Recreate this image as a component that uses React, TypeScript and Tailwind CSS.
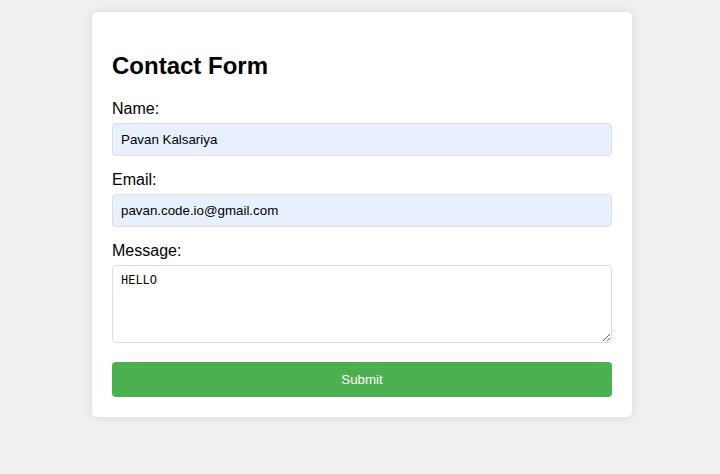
export default function App() {
  return (
    <div className="min-h-[474px] bg-[#f0f0f0] pl-1 pt-3 font-['Liberation_Sans',Arial,sans-serif] text-black">
      <div className="mx-auto w-[540px] rounded-[5px] bg-white p-5 shadow-[0_0_10px_rgba(0,0,0,0.1)]">
        <h2 className="my-5 text-2xl font-bold leading-7">Contact Form</h2>
        <form onSubmit={(e) => e.preventDefault()}>
          <label className="mb-[5px] block text-base leading-[18px]">Name:</label>
          <input
            type="text"
            defaultValue="Pavan Kalsariya"
            className="mb-[15px] block h-[33px] w-full rounded border border-[#ddd] bg-[#e8f0fe] px-2 text-[13.33px] outline-none"
          />
          <label className="mb-[5px] block text-base leading-[18px]">Email:</label>
          <input
            type="email"
            defaultValue="pavan.code.io@gmail.com"
            className="mb-[15px] block h-[33px] w-full rounded border border-[#ddd] bg-[#e8f0fe] px-2 text-[13.33px] outline-none"
          />
          <label className="mb-[5px] block text-base leading-[18px]">Message:</label>
          <textarea
            defaultValue="HELLO"
            className="mb-[19px] block h-[78px] w-full rounded border border-[#ddd] bg-white p-2 font-['Liberation_Mono',monospace] text-[12px] leading-[15px] outline-none"
          />
          <button
            type="submit"
            className="block h-[35px] w-full rounded bg-[#4caf50] text-[13.33px] text-white"
          >
            Submit
          </button>
        </form>
      </div>
    </div>
  )
}
